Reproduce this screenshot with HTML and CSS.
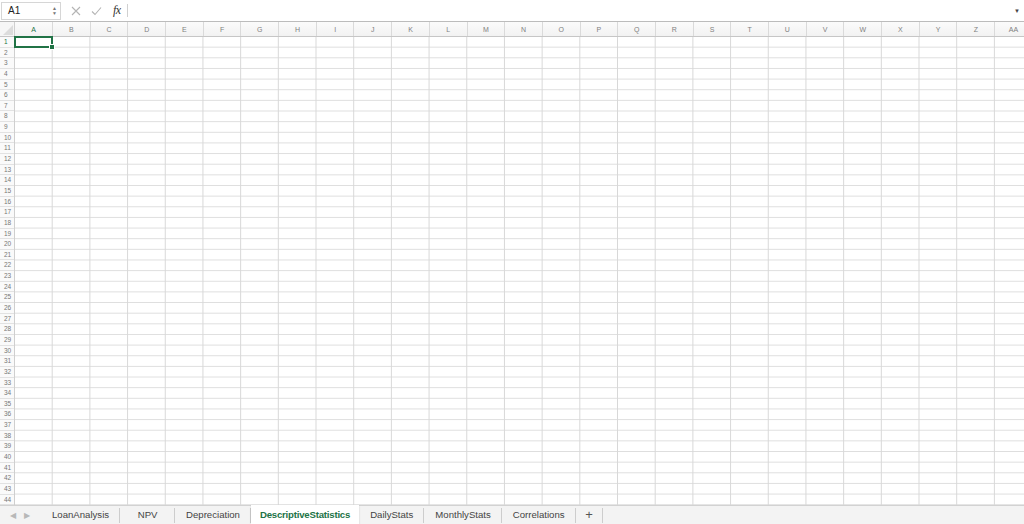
FILE: index.html
```html
<!DOCTYPE html>
<html>
<head>
<meta charset="utf-8">
<link rel="stylesheet" href="styles.css">
</head>
<body>
<div class="app">
  <div class="formula-bar">
    <div class="name-box">
      <span class="name-text">A1</span>
      <span class="spinner"><span class="up">&#9650;</span><span class="down">&#9660;</span></span>
    </div>
    <div class="formula-tools">
      <svg class="tool" width="10" height="10" viewBox="0 0 10 10"><path d="M1 1 L9 9 M9 1 L1 9" stroke="#b4b4b4" stroke-width="1.1" fill="none"/></svg>
      <svg class="tool check" width="11" height="10" viewBox="0 0 11 10"><path d="M1 5.5 L4 8.5 L10 1.5" stroke="#b4b4b4" stroke-width="1.1" fill="none"/></svg>
      <span class="fx">fx</span>
      <span class="fx-sep"></span>
    </div>
    <div class="formula-input"></div>
    <span class="fb-drop">&#9660;</span>
  </div>

  <div class="sheet">
    <div class="corner"><span class="corner-tri"></span></div>
    <div class="col-headers">
      <div class="ch active">A</div><div class="ch">B</div><div class="ch">C</div><div class="ch">D</div><div class="ch">E</div><div class="ch">F</div><div class="ch">G</div><div class="ch">H</div><div class="ch">I</div><div class="ch">J</div><div class="ch">K</div><div class="ch">L</div><div class="ch">M</div><div class="ch">N</div><div class="ch">O</div><div class="ch">P</div><div class="ch">Q</div><div class="ch">R</div><div class="ch">S</div><div class="ch">T</div><div class="ch">U</div><div class="ch">V</div><div class="ch">W</div><div class="ch">X</div><div class="ch">Y</div><div class="ch">Z</div><div class="ch">AA</div>
    </div>
    <div class="row-headers">
      <div class="rh active">1</div><div class="rh">2</div><div class="rh">3</div><div class="rh">4</div><div class="rh">5</div><div class="rh">6</div><div class="rh">7</div><div class="rh">8</div><div class="rh">9</div><div class="rh">10</div>
      <div class="rh">11</div><div class="rh">12</div><div class="rh">13</div><div class="rh">14</div><div class="rh">15</div><div class="rh">16</div><div class="rh">17</div><div class="rh">18</div><div class="rh">19</div><div class="rh">20</div>
      <div class="rh">21</div><div class="rh">22</div><div class="rh">23</div><div class="rh">24</div><div class="rh">25</div><div class="rh">26</div><div class="rh">27</div><div class="rh">28</div><div class="rh">29</div><div class="rh">30</div>
      <div class="rh">31</div><div class="rh">32</div><div class="rh">33</div><div class="rh">34</div><div class="rh">35</div><div class="rh">36</div><div class="rh">37</div><div class="rh">38</div><div class="rh">39</div><div class="rh">40</div>
      <div class="rh">41</div><div class="rh">42</div><div class="rh">43</div><div class="rh">44</div>
    </div>
    <div class="cells">
      <div class="selection"><span class="handle"></span></div>
    </div>
  </div>

  <div class="tab-bar">
    <div class="nav">
      <span class="arrow">&#9664;</span>
      <span class="arrow">&#9654;</span>
    </div>
    <div class="tabs">
      <div class="tab">LoanAnalysis</div>
      <div class="tab">NPV</div>
      <div class="tab">Depreciation</div>
      <div class="tab active">DescriptiveStatistics</div>
      <div class="tab">DailyStats</div>
      <div class="tab">MonthlyStats</div>
      <div class="tab">Correlations</div>
      <div class="tab add">+</div>
    </div>
  </div>
</div>
</body>
</html>
```

FILE: styles.css
```css
html, body {
  margin: 0;
  padding: 0;
  background: #ffffff;
  overflow: hidden;
}

.app {
  width: 1024px;
  height: 524px;
  display: flex;
  flex-direction: column;
  font-family: "Liberation Sans", Arial, sans-serif;
  overflow: hidden;
}

/* ---------- formula bar ---------- */
.formula-bar {
  height: 22px;
  flex: none;
  display: flex;
  align-items: center;
  box-sizing: border-box;
  border-bottom: 1px solid #bcbcbc;
  position: relative;
}

.name-box {
  width: 60px;
  height: 18px;
  margin-left: 1px;
  box-sizing: border-box;
  border: 1px solid #d6d6d6;
  display: flex;
  align-items: center;
  justify-content: space-between;
  padding: 0 3px 0 6px;
}

.name-text {
  font-size: 10px;
  color: #222;
}

.spinner {
  display: flex;
  flex-direction: column;
  line-height: 5px;
  font-size: 5px;
  color: #777;
}

.formula-tools {
  display: flex;
  align-items: center;
  height: 18px;
  padding-left: 10px;
}

.tool {
  display: block;
}

.check {
  margin-left: 10px;
}

.fx {
  font-family: "Liberation Serif", "Times New Roman", serif;
  font-style: italic;
  font-size: 12px;
  color: #333;
  margin-left: 11px;
  letter-spacing: -0.5px;
}

.fx-sep {
  width: 1px;
  height: 13px;
  background: #d0d0d0;
  margin-left: 6px;
}

.formula-input {
  flex: 1;
  height: 18px;
}

.fb-drop {
  font-size: 6px;
  color: #444;
  margin-right: 4px;
}

/* ---------- sheet ---------- */
.sheet {
  flex: 1;
  display: grid;
  grid-template-columns: 15.3px 1fr;
  grid-template-rows: 15px 1fr;
  overflow: hidden;
  min-height: 0;
}

.corner {
  background: #f6f6f6;
  border-right: 1px solid #cfcfcf;
  border-bottom: 1px solid #c6c6c6;
  box-sizing: border-box;
  position: relative;
}

.corner-tri {
  position: absolute;
  right: 1px;
  bottom: 1px;
  width: 0;
  height: 0;
  border-left: 10px solid transparent;
  border-bottom: 10px solid #dcdcdc;
}

.col-headers {
  display: flex;
  background: linear-gradient(#fbfbfb, #f2f2f2);
  border-bottom: 1px solid #c6c6c6;
  box-sizing: border-box;
}

.ch {
  flex: none;
  width: 37.7px;
  box-sizing: border-box;
  border-right: 1px solid #dadada;
  font-size: 7px;
  color: #808080;
  text-align: center;
  line-height: 15px;
}

.ch.active {
  color: #217346;
}

.row-headers {
  display: flex;
  flex-direction: column;
  background: #fafafa;
  border-right: 1px solid #cfcfcf;
  box-sizing: border-box;
}

.rh {
  flex: none;
  height: 10.65px;
  box-sizing: border-box;
  border-bottom: 1px solid #e2e2e2;
  font-size: 6.5px;
  color: #777;
  line-height: 10px;
  padding-left: 4px;
}

.rh.active {
  color: #217346;
}

.cells {
  position: relative;
  background-image:
    linear-gradient(to right, transparent 36.7px, #d8d8d8 36.7px),
    linear-gradient(to bottom, transparent 9.65px, #dedede 9.65px);
  background-size: 37.7px 100%, 100% 10.65px;
}

.selection {
  position: absolute;
  left: -1px;
  top: -1px;
  width: 38.7px;
  height: 11.65px;
  box-sizing: border-box;
  border: 2px solid #217346;
}

.handle {
  position: absolute;
  right: -4px;
  bottom: -4px;
  width: 4px;
  height: 4px;
  background: #217346;
  border: 1px solid #fff;
}

/* ---------- tab bar ---------- */
.tab-bar {
  height: 19px;
  flex: none;
  display: flex;
  align-items: stretch;
  background: #f3f3f3;
  border-top: 1px solid #d2d2d2;
  box-sizing: border-box;
}

.nav {
  width: 41px;
  display: flex;
  align-items: center;
  padding-left: 10px;
  box-sizing: border-box;
  gap: 8px;
}

.arrow {
  font-size: 8px;
  color: #b8b8b8;
}

.tabs {
  display: flex;
  align-items: stretch;
}

.tab {
  font-size: 9.6px;
  color: #444;
  padding: 0 11px;
  min-width: 55px;
  box-sizing: border-box;
  text-align: center;
  line-height: 18px;
  position: relative;
}

.tab::after {
  content: "";
  position: absolute;
  right: 0;
  top: 2px;
  bottom: 1px;
  width: 1px;
  background: #cdcdcd;
}

.tab.active {
  background: #ffffff;
  color: #217346;
  font-weight: bold;
  letter-spacing: -0.2px;
  margin-top: -1px;
  padding: 1px 9px 0;
  box-shadow: 0 1px 2px rgba(0,0,0,0.15);
}

.tab.active::after {
  display: none;
}

.tab.add {
  min-width: 27px;
  padding: 0 8px;
  font-size: 13px;
  color: #555;
  line-height: 17px;
}
```
